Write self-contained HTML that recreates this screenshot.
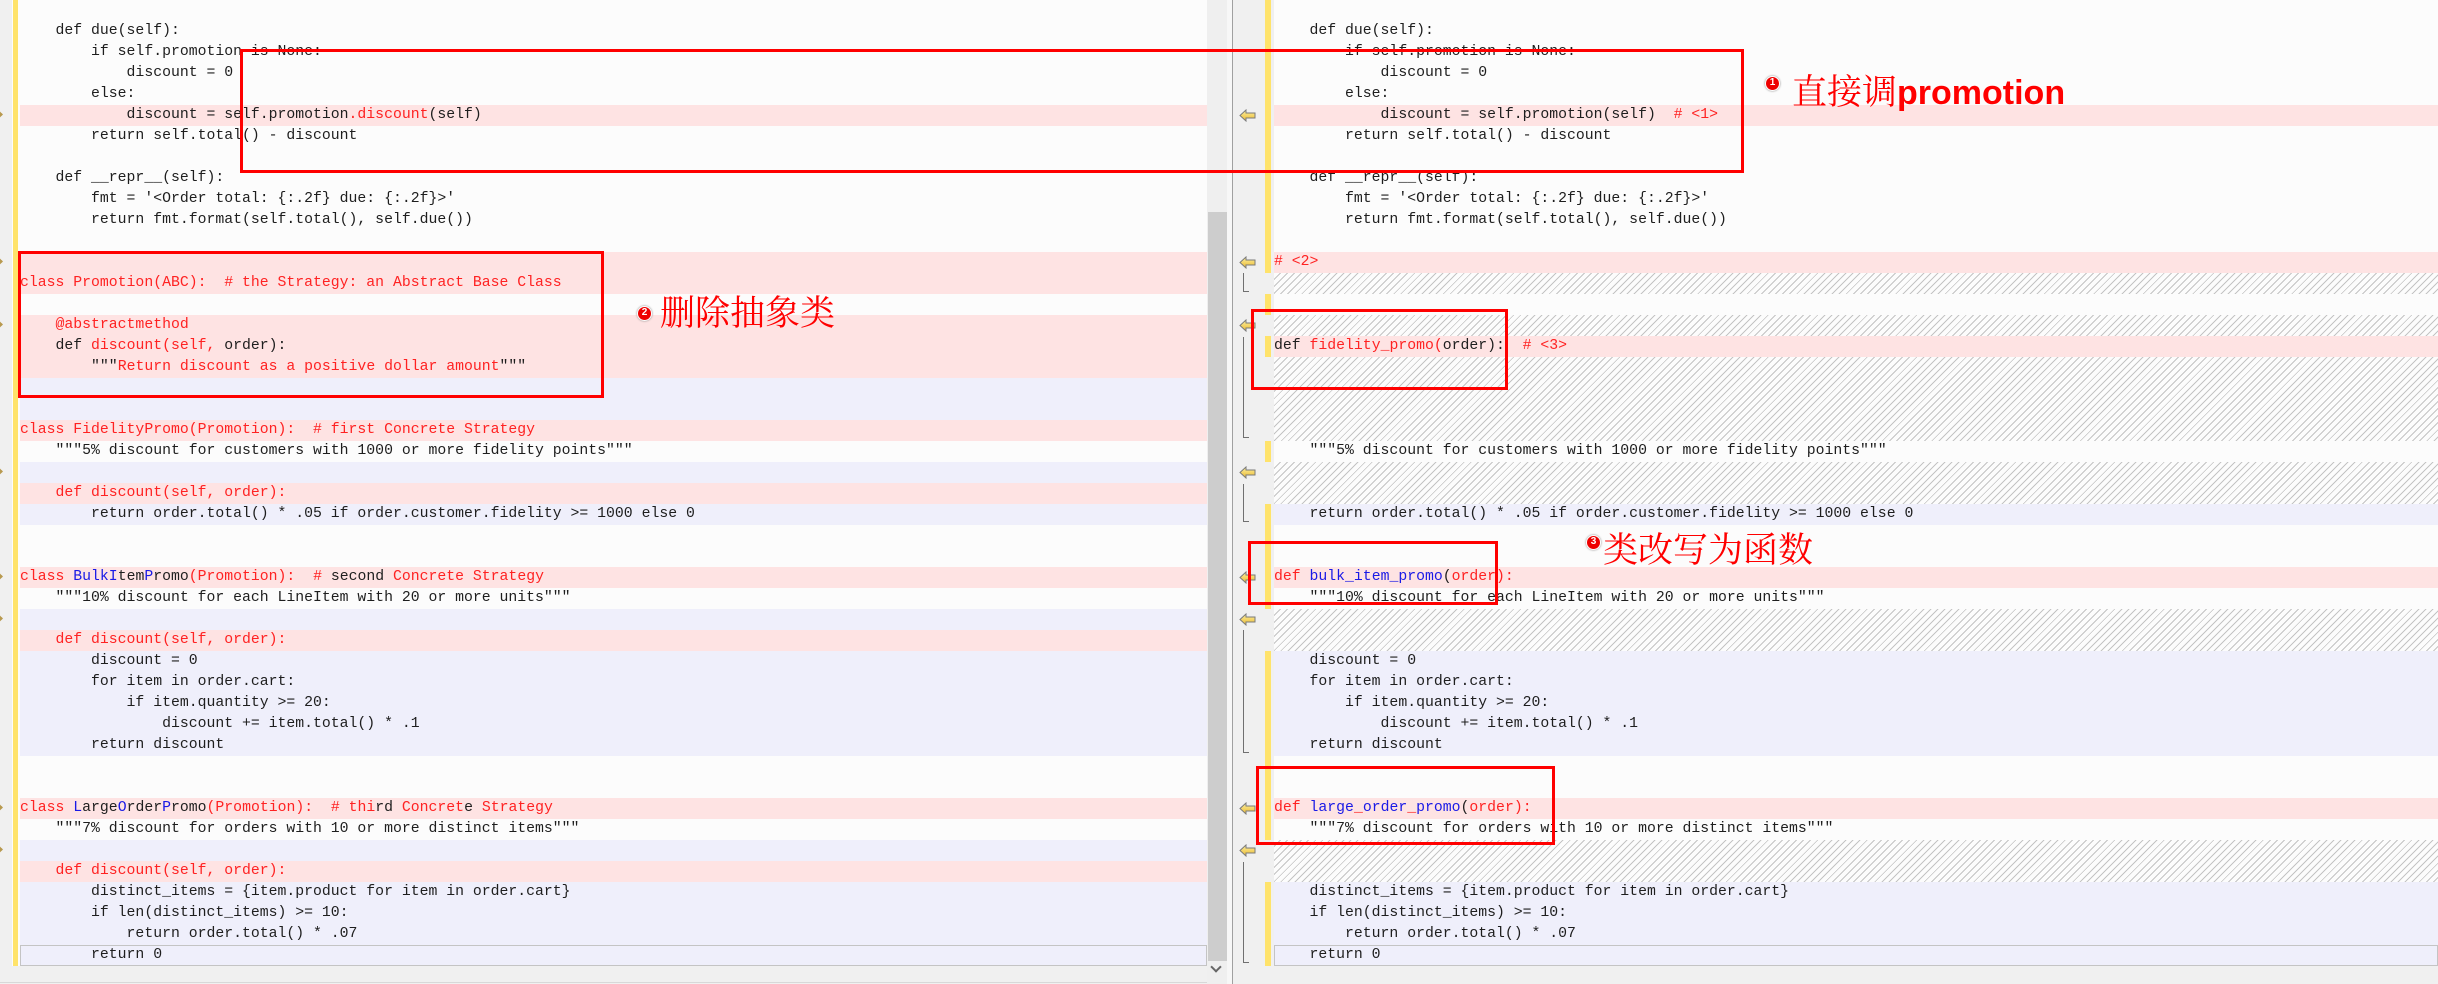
<!DOCTYPE html>
<html><head><meta charset="utf-8">
<style>
*{margin:0;padding:0;box-sizing:border-box}
body{width:2438px;height:984px;overflow:hidden;background:#f0f0f0;position:relative;font-family:"Liberation Mono",monospace;font-size:14.8px;color:#1e1e1e}
.pane{position:absolute;top:0;height:966px;overflow:hidden}
.row{position:absolute;left:0;right:0;height:21px;line-height:21px;white-space:pre}
.w{background:#fcfcfc}
.p{background:#fee3e3}
.l{background:#efeffb}
.h{background:repeating-linear-gradient(135deg,#fcfcfc 0 4px,#c4c4c4 4px 5px)}
.r{color:#f22}
.b{color:#1a1ae6}
.box{position:absolute;border:3px solid #f00}
.ann{position:absolute;font-family:"Noto Serif CJK SC","WenQuanYi Zen Hei",serif;font-size:35px;line-height:35px;color:#f00;white-space:nowrap}
.ann b{font-family:"Liberation Sans",sans-serif;font-weight:bold;font-size:34px}
.num{position:absolute;width:15px;height:15px;border-radius:50%;background:#e00;border:1.5px solid #fff;box-shadow:0 0 2px #888;color:#fff;font:bold 10px/12px "Liberation Sans",sans-serif;text-align:center}
.arrow{position:absolute;left:1239px;width:17px;height:13px}
.brk{position:absolute;left:1243px;width:6px;border-left:1.5px solid #707070;border-bottom:1.5px solid #707070}
.chev{position:absolute;left:0;width:4px;height:7px;border-right:2px solid #b89a50;border-top:2px solid #b89a50;transform:rotate(45deg);margin-left:-3px}
.ys{position:absolute;left:1265px;width:6px;height:21px;background:#ffe36b}
.cur{border:1px solid #c4c4c4;line-height:19px;text-indent:-1px}
</style></head><body>

<!-- left pane -->
<div class="pane" style="left:0;width:1207px;background:#fcfcfc">
<div style="position:absolute;left:0;top:0;width:12px;height:966px;background:#f0f0f0"></div>
<div style="position:absolute;left:13px;top:0;width:5px;height:966px;background:#ffe36b"></div>
<div style="position:absolute;left:20px;right:0;top:0;height:966px">
<div class="row w" style="top:0"></div>
<div class="row w" style="top:21px">    def due(self):</div>
<div class="row w" style="top:42px">        if self.promotion is None:</div>
<div class="row w" style="top:63px">            discount = 0</div>
<div class="row w" style="top:84px">        else:</div>
<div class="row p" style="top:105px">            discount = self.promotion<span class="r">.discount</span>(self)</div>
<div class="row w" style="top:126px">        return self.total() - discount</div>
<div class="row w" style="top:147px"></div>
<div class="row w" style="top:168px">    def __repr__(self):</div>
<div class="row w" style="top:189px">        fmt = '&lt;Order total: {:.2f} due: {:.2f}&gt;'</div>
<div class="row w" style="top:210px">        return fmt.format(self.total(), self.due())</div>
<div class="row w" style="top:231px"></div>
<div class="row p" style="top:252px"></div>
<div class="row p r" style="top:273px">class Promotion(ABC):  # the Strategy: an Abstract Base Class</div>
<div class="row w" style="top:294px"></div>
<div class="row p r" style="top:315px">    @abstractmethod</div>
<div class="row p" style="top:336px">    def <span class="r">discount(self,</span> order):</div>
<div class="row p" style="top:357px">        """<span class="r">Return discount as a positive dollar amount</span>"""</div>
<div class="row l" style="top:378px"></div>
<div class="row l" style="top:399px"></div>
<div class="row p r" style="top:420px">class FidelityPromo(Promotion):  # first Concrete Strategy</div>
<div class="row w" style="top:441px">    """5% discount for customers with 1000 or more fidelity points"""</div>
<div class="row l" style="top:462px"></div>
<div class="row p r" style="top:483px">    def discount(self, order):</div>
<div class="row l" style="top:504px">        return order.total() * .05 if order.customer.fidelity &gt;= 1000 else 0</div>
<div class="row w" style="top:525px"></div>
<div class="row w" style="top:546px"></div>
<div class="row p" style="top:567px"><span class="r">class </span><span class="b">BulkI</span>tem<span class="b">P</span>romo<span class="r">(Promotion):  # </span>second <span class="r">Concrete Strategy</span></div>
<div class="row w" style="top:588px">    """10% discount for each LineItem with 20 or more units"""</div>
<div class="row l" style="top:609px"></div>
<div class="row p r" style="top:630px">    def discount(self, order):</div>
<div class="row l" style="top:651px">        discount = 0</div>
<div class="row l" style="top:672px">        for item in order.cart:</div>
<div class="row l" style="top:693px">            if item.quantity &gt;= 20:</div>
<div class="row l" style="top:714px">                discount += item.total() * .1</div>
<div class="row l" style="top:735px">        return discount</div>
<div class="row w" style="top:756px"></div>
<div class="row w" style="top:777px"></div>
<div class="row p" style="top:798px"><span class="r">class </span><span class="b">L</span>arge<span class="b">O</span>rder<span class="b">P</span>romo<span class="r">(Promotion):  # </span><span class="r">thi</span>rd <span class="r">Concret</span>e <span class="r">Strategy</span></div>
<div class="row w" style="top:819px">    """7% discount for orders with 10 or more distinct items"""</div>
<div class="row l" style="top:840px"></div>
<div class="row p r" style="top:861px">    def discount(self, order):</div>
<div class="row l" style="top:882px">        distinct_items = {item.product for item in order.cart}</div>
<div class="row l" style="top:903px">        if len(distinct_items) &gt;= 10:</div>
<div class="row l" style="top:924px">            return order.total() * .07</div>
<div class="row l cur" style="top:945px">        return 0</div>
</div>
</div>
<div class="chev" style="top:112px"></div><div class="chev" style="top:259px"></div><div class="chev" style="top:322px"></div><div class="chev" style="top:469px"></div><div class="chev" style="top:574px"></div><div class="chev" style="top:616px"></div><div class="chev" style="top:805px"></div><div class="chev" style="top:847px"></div>
<div style="position:absolute;left:0;top:982px;width:1207px;height:1px;background:#d8d8d8"></div>

<!-- scrollbar -->
<div style="position:absolute;left:1207px;top:0;width:20px;height:984px;background:#efefef"></div>
<div style="position:absolute;left:1208px;top:212px;width:19px;height:749px;background:#cdcdcd"></div>
<div style="position:absolute;left:1212px;top:966px;width:8px;height:8px;border-right:2px solid #666;border-bottom:2px solid #666;transform:rotate(45deg);margin-top:-3px"></div>
<div style="position:absolute;left:1227px;top:0;width:5px;height:984px;background:#f7f7f7"></div>
<div style="position:absolute;left:1232px;top:0;width:1px;height:984px;background:#a0a0a0"></div>

<!-- right pane -->
<div class="pane" style="left:1274px;width:1164px;background:#fcfcfc">
<div class="row w" style="top:0"></div>
<div class="row w" style="top:21px">    def due(self):</div>
<div class="row w" style="top:42px">        if self.promotion is None:</div>
<div class="row w" style="top:63px">            discount = 0</div>
<div class="row w" style="top:84px">        else:</div>
<div class="row p" style="top:105px">            discount = self.promotion(self)  <span class="r"># &lt;1&gt;</span></div>
<div class="row w" style="top:126px">        return self.total() - discount</div>
<div class="row w" style="top:147px"></div>
<div class="row w" style="top:168px">    def __repr__(self):</div>
<div class="row w" style="top:189px">        fmt = '&lt;Order total: {:.2f} due: {:.2f}&gt;'</div>
<div class="row w" style="top:210px">        return fmt.format(self.total(), self.due())</div>
<div class="row w" style="top:231px"></div>
<div class="row p r" style="top:252px"># &lt;2&gt;</div>
<div class="row h" style="top:273px"></div>
<div class="row w" style="top:294px"></div>
<div class="row h" style="top:315px"></div>
<div class="row p" style="top:336px">def <span class="r">fidelity_promo(</span>order):  <span class="r"># &lt;3&gt;</span></div>
<div class="row h" style="top:357px;height:84px"></div>
<div class="row w" style="top:441px">    """5% discount for customers with 1000 or more fidelity points"""</div>
<div class="row h" style="top:462px;height:42px"></div>
<div class="row l" style="top:504px">    return order.total() * .05 if order.customer.fidelity &gt;= 1000 else 0</div>
<div class="row w" style="top:525px"></div>
<div class="row w" style="top:546px"></div>
<div class="row p" style="top:567px"><span class="r">def </span><span class="b">bulk_item_promo</span>(<span class="r">order):</span></div>
<div class="row w" style="top:588px">    """10% discount for each LineItem with 20 or more units"""</div>
<div class="row h" style="top:609px;height:42px"></div>
<div class="row l" style="top:651px">    discount = 0</div>
<div class="row l" style="top:672px">    for item in order.cart:</div>
<div class="row l" style="top:693px">        if item.quantity &gt;= 20:</div>
<div class="row l" style="top:714px">            discount += item.total() * .1</div>
<div class="row l" style="top:735px">    return discount</div>
<div class="row w" style="top:756px"></div>
<div class="row w" style="top:777px"></div>
<div class="row p" style="top:798px"><span class="r">def </span><span class="b">large</span><span class="r">_</span><span class="b">order</span><span class="r">_</span><span class="b">promo</span>(<span class="r">order):</span></div>
<div class="row w" style="top:819px">    """7% discount for orders with 10 or more distinct items"""</div>
<div class="row h" style="top:840px;height:42px"></div>
<div class="row l" style="top:882px">    distinct_items = {item.product for item in order.cart}</div>
<div class="row l" style="top:903px">    if len(distinct_items) &gt;= 10:</div>
<div class="row l" style="top:924px">        return order.total() * .07</div>
<div class="row l cur" style="top:945px">    return 0</div>
</div>

<!-- right yellow segments -->
<div class="ys" style="top:0;height:273px"></div>
<div class="ys" style="top:294px"></div>
<div class="ys" style="top:336px"></div>
<div class="ys" style="top:441px"></div>
<div class="ys" style="top:504px;height:105px"></div>
<div class="ys" style="top:651px;height:189px"></div>
<div class="ys" style="top:882px;height:84px"></div>

<!-- arrows -->
<svg width="0" height="0" style="position:absolute"><defs><linearGradient id="g" x1="0" y1="0" x2="0" y2="1"><stop offset="0" stop-color="#fff2a0"/><stop offset="1" stop-color="#e8b830"/></linearGradient></defs></svg>
<svg class="arrow" style="top:109px" viewBox="0 0 17 13"><polygon points="1,6.5 7,1 7,4 16,4 16,9 7,9 7,12" fill="url(#g)" stroke="#7a7a7a" stroke-width="1"/></svg>
<svg class="arrow" style="top:256px" viewBox="0 0 17 13"><polygon points="1,6.5 7,1 7,4 16,4 16,9 7,9 7,12" fill="url(#g)" stroke="#7a7a7a" stroke-width="1"/></svg>
<svg class="arrow" style="top:319px" viewBox="0 0 17 13"><polygon points="1,6.5 7,1 7,4 16,4 16,9 7,9 7,12" fill="url(#g)" stroke="#7a7a7a" stroke-width="1"/></svg>
<svg class="arrow" style="top:466px" viewBox="0 0 17 13"><polygon points="1,6.5 7,1 7,4 16,4 16,9 7,9 7,12" fill="url(#g)" stroke="#7a7a7a" stroke-width="1"/></svg>
<svg class="arrow" style="top:571px" viewBox="0 0 17 13"><polygon points="1,6.5 7,1 7,4 16,4 16,9 7,9 7,12" fill="url(#g)" stroke="#7a7a7a" stroke-width="1"/></svg>
<svg class="arrow" style="top:613px" viewBox="0 0 17 13"><polygon points="1,6.5 7,1 7,4 16,4 16,9 7,9 7,12" fill="url(#g)" stroke="#7a7a7a" stroke-width="1"/></svg>
<svg class="arrow" style="top:802px" viewBox="0 0 17 13"><polygon points="1,6.5 7,1 7,4 16,4 16,9 7,9 7,12" fill="url(#g)" stroke="#7a7a7a" stroke-width="1"/></svg>
<svg class="arrow" style="top:844px" viewBox="0 0 17 13"><polygon points="1,6.5 7,1 7,4 16,4 16,9 7,9 7,12" fill="url(#g)" stroke="#7a7a7a" stroke-width="1"/></svg>
<div class="brk" style="top:273px;height:19px"></div>
<div class="brk" style="top:337px;height:101px"></div>
<div class="brk" style="top:484px;height:38px"></div>
<div class="brk" style="top:630px;height:123px"></div>
<div class="brk" style="top:862px;height:101px"></div>

<!-- annotation boxes -->
<div class="box" style="left:240px;top:49px;width:1504px;height:124px"></div>
<div class="box" style="left:18px;top:251px;width:586px;height:147px"></div>
<div class="box" style="left:1251px;top:309px;width:257px;height:81px"></div>
<div class="box" style="left:1248px;top:541px;width:250px;height:64px"></div>
<div class="box" style="left:1256px;top:766px;width:299px;height:79px"></div>

<div class="num" style="left:1765px;top:76px">1</div>
<div class="ann" style="left:1792px;top:73px">直接调<b>promotion</b></div>
<div class="num" style="left:637px;top:306px">2</div>
<div class="ann" style="left:660px;top:294px">删除抽象类</div>
<div class="num" style="left:1586px;top:535px">3</div>
<div class="ann" style="left:1603px;top:531px">类改写为函数</div>
</body></html>
